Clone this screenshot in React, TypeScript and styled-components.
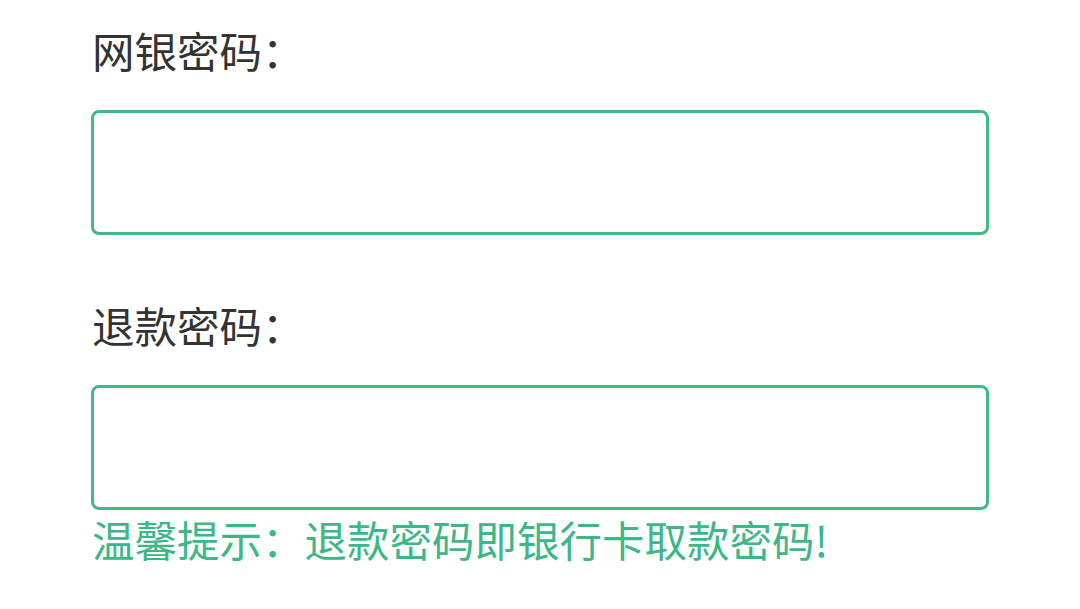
import React from 'react';
import styled, { createGlobalStyle } from 'styled-components';

const GlobalStyle = createGlobalStyle`
	html, body {
		margin: 0;
		padding: 0;
		background: #ffffff;
	}
	body {
		font-family: "Noto Sans CJK SC", "Noto Sans", sans-serif;
	}
`;

const Page = styled.div`
	width: 1080px;
	height: 609px;
	box-sizing: border-box;
	padding: 18px 0 0 91px;
	overflow: hidden;
`;

const Field = styled.div<{ $gap: number }>`
	display: flex;
	flex-direction: column;
	width: 898px;
	margin-top: ${(p) => p.$gap}px;
`;

const Label = styled.label`
	display: block;
	font-size: 42.5px;
	line-height: 64px;
	height: 64px;
	color: #333333;
	padding-left: 1px;
	margin-bottom: 28px;
	white-space: nowrap;
`;

const Input = styled.input`
	box-sizing: border-box;
	width: 100%;
	height: 125px;
	border: 3px solid #41b988;
	border-radius: 8px;
	background: #ffffff;
	outline: none;
	padding: 0 20px;
	font-size: 40px;
	font-family: inherit;
`;

const Hint = styled.p`
	margin: -3px 0 0;
	padding-left: 1px;
	font-size: 42.5px;
	line-height: 64px;
	color: #3cb887;
	white-space: nowrap;
`;

const App: React.FC = () => {
	return (
		<>
			<GlobalStyle />
			<Page>
				<Field $gap={0}>
					<Label>网银密码：</Label>
					<Input type="password" />
				</Field>
				<Field $gap={58}>
					<Label>退款密码：</Label>
					<Input type="password" />
					<Hint>温馨提示：退款密码即银行卡取款密码!</Hint>
				</Field>
			</Page>
		</>
	);
};

export default App;
